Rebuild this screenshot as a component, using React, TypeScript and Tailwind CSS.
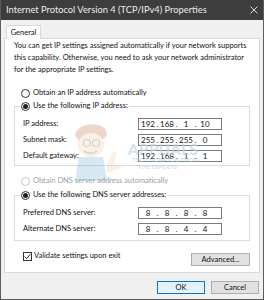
import React, { Fragment } from "react";

function Radio({ checked, disabled }: { checked?: boolean; disabled?: boolean }) {
  return (
    <span
      className={`w-[9px] h-[9px] rounded-full border bg-white flex items-center justify-center shrink-0 ${
        disabled ? "border-[#c4c4c4]" : "border-[#333333]"
      }`}
    >
      {checked && <span className="w-[5px] h-[5px] rounded-full bg-[#1e1e1e]" />}
    </span>
  );
}

function IpBox({ parts }: { parts: string[] }) {
  return (
    <div className="w-[84px] h-[12px] border border-[#7a7a7a] bg-white flex items-center pl-[1px] text-[8px] leading-none text-[#111]">
      {parts.map((p, i) => (
        <Fragment key={i}>
          <span className="w-[16px] text-center">{p}</span>
          {i < 3 && <span className="w-[3px] text-center">.</span>}
        </Fragment>
      ))}
    </div>
  );
}

function Field({ label, parts }: { label: string; parts: string[] }) {
  return (
    <div className="flex items-center h-[12px]">
      <span className="w-[115px] text-[7.5px] leading-none">{label}</span>
      <IpBox parts={parts} />
    </div>
  );
}

function Btn({ children, primary, w }: { children: React.ReactNode; primary?: boolean; w: string }) {
  return (
    <div
      className={`${w} h-[13px] flex items-center justify-center text-[7.5px] leading-none border ${
        primary ? "bg-[#e5f1fb] border-[#0078d7]" : "bg-[#e1e1e1] border-[#adadad]"
      }`}
    >
      {children}
    </div>
  );
}

export default function App() {
  return (
    <div className="w-[264px] h-[300px] bg-[#f0f0f0] flex flex-col font-['Lato',sans-serif] text-[#111] border-x border-b border-[#5c5c5c] overflow-hidden relative">
      {/* Title bar */}
      <div className="h-[20px] bg-[#3d3d3d] flex items-center justify-between pl-[6px] pr-[6px] text-[#ececec] -mx-px">
        <span className="text-[9.3px] leading-none">Internet Protocol Version 4 (TCP/IPv4) Properties</span>
        <svg width="8" height="8" viewBox="0 0 8 8">
          <path d="M0.5 0.5 L7.5 7.5 M7.5 0.5 L0.5 7.5" stroke="#d8d8d8" strokeWidth="1" />
        </svg>
      </div>

      {/* Tabs */}
      <div className="pt-[5px] pl-[4px] flex">
        <div className="relative z-10 -mb-px ml-[1px] w-[35px] h-[14px] bg-white border border-b-0 border-[#d9d9d9] flex items-center justify-center text-[7.5px] leading-none">
          General
        </div>
      </div>

      {/* Panel */}
      <div className="ml-[3px] w-[256px] h-[235px] bg-white border border-[#d9d9d9] pl-[9px] pt-[1px] flex flex-col relative">
        <p className="text-[7.5px] leading-[12px] whitespace-nowrap">
          You can get IP settings assigned automatically if your network supports
          <br />
          this capability. Otherwise, you need to ask your network administrator
          <br />
          for the appropriate IP settings.
        </p>

        <div className="mt-[11px] h-[12px] flex items-center gap-[3px] pl-[7px]">
          <Radio />
          <span className="text-[7.5px] leading-none">Obtain an IP address automatically</span>
        </div>

        <fieldset className="w-[236px] border border-[#dcdcdc] pb-[3px] mt-[1px]">
          <legend className="ml-[5px] px-[1px] h-[12px] flex items-center gap-[3px]">
            <Radio checked />
            <span className="text-[7.5px] leading-none">Use the following IP address:</span>
          </legend>
          <div className="pl-[8px] pt-[6px] flex flex-col gap-[4px]">
            <Field label="IP address:" parts={["192", "168", "1", "10"]} />
            <Field label="Subnet mask:" parts={["255", "255", "255", "0"]} />
            <Field label="Default gateway:" parts={["192", "168", "1", "1"]} />
          </div>
        </fieldset>

        <div className="mt-[9px] h-[12px] flex items-center gap-[3px] pl-[7px]">
          <Radio disabled />
          <span className="text-[7.5px] leading-none text-[#a0a0a0]">Obtain DNS server address automatically</span>
        </div>

        <fieldset className="w-[236px] border border-[#dcdcdc] pb-[5px] mt-[2px]">
          <legend className="ml-[5px] px-[1px] h-[12px] flex items-center gap-[3px]">
            <Radio checked />
            <span className="text-[7.5px] leading-none">Use the following DNS server addresses:</span>
          </legend>
          <div className="pl-[8px] pt-[6px] flex flex-col gap-[4px]">
            <Field label="Preferred DNS server:" parts={["8", "8", "8", "8"]} />
            <Field label="Alternate DNS server:" parts={["8", "8", "4", "4"]} />
          </div>
        </fieldset>

        <div className="flex mt-[10px] w-[236px]">
          <div className="flex items-center gap-[2px] pl-[9px] h-[10px]">
            <span className="w-[9px] h-[9px] border border-[#333] bg-white flex items-center justify-center">
              <svg width="7" height="7" viewBox="0 0 7 7">
                <path d="M0.8 3.6 L2.7 5.6 L6.3 1.2" stroke="#222" strokeWidth="1" fill="none" />
              </svg>
            </span>
            <span className="text-[7.5px] leading-none">Validate settings upon exit</span>
          </div>
          <div className="ml-auto mt-[2px]">
            <Btn w="w-[59px]">Advanced...</Btn>
          </div>
        </div>

        {/* watermark */}
        <svg
          className="absolute left-[62px] top-[82px] pointer-events-none opacity-25"
          width="62"
          height="60"
          viewBox="0 0 62 60"
        >
          <path d="M8 14 C10 4 26 0 36 6 C42 10 40 16 36 18 L12 20 Z" fill="#b5652a" />
          <ellipse cx="24" cy="24" rx="13" ry="12" fill="#f2c49a" />
          <circle cx="20" cy="22" r="3.5" fill="none" stroke="#555" strokeWidth="1.2" />
          <circle cx="29" cy="22" r="3.5" fill="none" stroke="#555" strokeWidth="1.2" />
          <path d="M17 30 C21 33 27 33 30 30" stroke="#8a3b1a" strokeWidth="1.5" fill="none" />
          <path d="M12 36 L36 36 L40 60 L8 60 Z" fill="#5fa7c9" />
          <path d="M40 44 L46 30 L50 32 L47 44 L56 46 L40 52 Z" fill="#f2c49a" />
        </svg>
        <div className="absolute left-[123px] top-[104px] flex flex-col items-start pointer-events-none">
          <span className="text-[15px] leading-[13px] font-black tracking-[0.5px] text-[#c9d2db]/70">APPUALS</span>
          <span className="text-[6px] leading-[7px] font-bold text-[#b3d7ea]/70 pl-[4px]">TECH HOW-TO'S FROM</span>
          <span className="text-[6px] leading-[7px] font-bold text-[#b3d7ea]/70 pl-[10px]">THE EXPERTS!</span>
        </div>
      </div>

      {/* Bottom buttons */}
      <div className="flex justify-end gap-[6px] mt-[8px] pr-[4px]">
        <Btn primary w="w-[48px]">OK</Btn>
        <Btn w="w-[48px]">Cancel</Btn>
      </div>
    </div>
  );
}
